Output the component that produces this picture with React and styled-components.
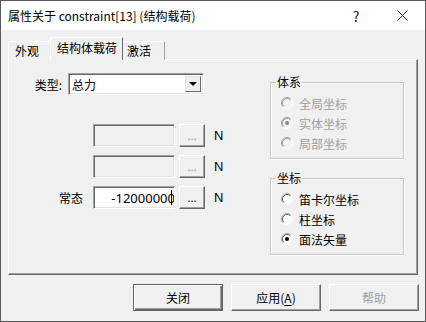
import styled, { createGlobalStyle } from "styled-components";

/////////////////////////////style/////////////////////////////
const GlobalStyle = createGlobalStyle`
  html, body {
    margin: 0;
    padding: 0;
    background: #f0f0f0;
  }
  body {
    font-family: "Noto Sans CJK SC", "Liberation Sans", sans-serif;
    font-size: 12px;
    color: #000;
  }
`;

const Window = styled.div`
  width: 426px;
  height: 322px;
  box-sizing: border-box;
  border: 1px solid #5a5a5a;
  background: #f0f0f0;
  display: flex;
  flex-direction: column;
  overflow: hidden;
`;

const TitleBar = styled.div`
  height: 29px;
  background: #fff;
  display: flex;
  align-items: center;
  padding-left: 7px;
  font-size: 12px;
`;

const TitleText = styled.div`
  flex: 1;
  white-space: nowrap;
`;

const TitleButton = styled.div`
  width: 46px;
  height: 29px;
  display: flex;
  align-items: center;
  justify-content: center;
  font-size: 14px;
  color: #222;
`;

const Body = styled.div`
  flex: 1;
  display: flex;
  flex-direction: column;
  padding: 8px 7px 0 7px;
`;

const TabStrip = styled.div`
  display: flex;
  height: 22px;
  align-items: flex-end;
  position: relative;
  z-index: 1;
  margin-bottom: -1px;
`;

const Tab = styled.div`
  box-sizing: border-box;
  width: ${(p) => p.w}px;
  height: ${(p) => (p.active ? 23 : 19)}px;
  padding-left: ${(p) => p.pl}px;
  margin: ${(p) => (p.active ? "0 -2px" : "0")};
  line-height: ${(p) => (p.active ? 19 : 17)}px;
  background: #f0f0f0;
  border-top: 1px solid #fff;
  border-left: 1px solid ${(p) => (p.first || p.active ? "#fff" : "transparent")};
  border-right: 1px solid ${(p) => (p.active ? "#696969" : "#a0a0a0")};
  white-space: nowrap;
  position: relative;
  z-index: ${(p) => (p.active ? 2 : 1)};
`;

const Panel = styled.div`
  width: 410px;
  height: 216px;
  box-sizing: border-box;
  border: 1px solid;
  border-color: #fff #696969 #696969 #fff;
  box-shadow: inset -1px -1px 0 #a0a0a0;
  display: flex;
`;

const LeftCol = styled.div`
  width: 261px;
  padding-top: 13px;
  display: flex;
  flex-direction: column;
`;

const TypeRow = styled.div`
  display: flex;
  align-items: center;
  height: 22px;
  margin-bottom: 29px;
`;

const TypeLabel = styled.div`
  width: 53px;
  text-align: right;
  margin-right: 6px;
`;

const Combo = styled.div`
  width: 136px;
  height: 22px;
  box-sizing: border-box;
  border: 1px solid;
  border-color: #a0a0a0 #fff #fff #a0a0a0;
  box-shadow: inset 1px 1px 0 #696969, inset -1px -1px 0 #e3e3e3;
  background: #fff;
  display: flex;
  align-items: center;
  padding: 2px 2px 2px 3px;
`;

const ComboText = styled.div`
  flex: 1;
`;

const ComboButton = styled.div`
  width: 16px;
  height: 16px;
  box-sizing: border-box;
  background: #f0f0f0;
  border: 1px solid;
  border-color: #e3e3e3 #696969 #696969 #e3e3e3;
  display: flex;
  align-items: center;
  justify-content: center;
`;

const Arrow = styled.div`
  width: 0;
  height: 0;
  border-left: 4px solid transparent;
  border-right: 4px solid transparent;
  border-top: 4px solid #000;
`;

const FieldRow = styled.div`
  display: flex;
  align-items: center;
  height: 23px;
  margin-bottom: 8px;
`;

const FieldLabel = styled.div`
  width: 74px;
  text-align: right;
  margin-right: 10px;
`;

const Field = styled.div`
  width: 82px;
  height: 23px;
  box-sizing: border-box;
  border: 1px solid;
  border-color: #a0a0a0 #fff #fff #a0a0a0;
  box-shadow: inset 1px 1px 0 #696969, inset -1px -1px 0 #e3e3e3;
  background: ${(p) => (p.disabled ? "#f0f0f0" : "#fff")};
  display: flex;
  align-items: center;
  justify-content: flex-end;
  overflow: hidden;
  padding-right: 2px;
  font-family: "Noto Sans", "Liberation Sans", sans-serif;
  font-size: 13px;
`;

const FieldValue = styled.span`
  margin-right: -4px;
  white-space: nowrap;
`;

const Caret = styled.span`
  display: inline-block;
  width: 1px;
  height: 15px;
  background: #000;
  position: relative;
  z-index: 1;
`;

const DotsButton = styled.div`
  width: 26px;
  height: 23px;
  margin-left: 4px;
  box-sizing: border-box;
  border: 1px solid;
  border-color: #fff #696969 #696969 #fff;
  box-shadow: inset -1px -1px 0 #a0a0a0;
  display: flex;
  align-items: center;
  justify-content: center;
  color: ${(p) => (p.disabled ? "#a0a0a0" : "#000")};
  font-size: 11px;
  padding-bottom: 2px;
`;

const Unit = styled.div`
  margin-left: 9px;
  font-family: "Liberation Sans", sans-serif;
  font-size: 13px;
`;

const RightCol = styled.div`
  width: 134px;
  padding-top: 15px;
  display: flex;
  flex-direction: column;
  gap: 12px;
`;

const Group = styled.fieldset`
  margin: 0;
  padding: 4px 10px 5px 10px;
  border: 1px solid #c8c8c8;
  box-shadow: 1px 1px 0 #fff, inset 1px 1px 0 #fff;
  min-width: 0;
`;

const Legend = styled.legend`
  padding: 0 1px;
  margin-left: -5px;
  line-height: 14px;
`;

const RadioRow = styled.div`
  display: flex;
  align-items: center;
  height: 20px;
  color: ${(p) => (p.disabled ? "#a0a0a0" : "#000")};
`;

const RadioLabel = styled.span`
  margin-left: 6px;
`;

const Footer = styled.div`
  display: flex;
  justify-content: flex-end;
  gap: 8px;
  padding: 9px 0 0 0;
  margin-right: -1px;
`;

const Button = styled.div`
  width: 90px;
  height: 27px;
  box-sizing: border-box;
  border: 1px solid;
  border-color: ${(p) =>
    p.primary ? "#646464" : "#fff #696969 #696969 #fff"};
  box-shadow: ${(p) =>
    p.primary
      ? "inset 1px 1px 0 #fff, inset -1px -1px 0 #696969, inset -2px -2px 0 #a0a0a0"
      : "inset -1px -1px 0 #a0a0a0"};
  display: flex;
  align-items: center;
  justify-content: center;
  color: ${(p) => (p.disabled ? "#a0a0a0" : "#000")};

  u {
    text-underline-offset: 2px;
  }
`;

function Radio({ checked, disabled }) {
  const dark = disabled ? "#a0a0a0" : "#696969";
  return (
    <svg width="12" height="12" viewBox="0 0 12 12">
      <circle cx="6" cy="6" r="4.5" fill={disabled ? "#f0f0f0" : "#fff"} />
      <path d="M2.11 9.89 A5.5 5.5 0 0 1 9.89 2.11" fill="none" stroke="#a0a0a0" />
      <path d="M2.82 9.18 A4.5 4.5 0 0 1 9.18 2.82" fill="none" stroke={dark} />
      <path d="M9.89 2.11 A5.5 5.5 0 0 1 2.11 9.89" fill="none" stroke="#fff" />
      {checked && <circle cx="6" cy="6" r="2" fill={disabled ? "#8a8a8a" : "#000"} />}
    </svg>
  );
}

function App() {
  return (
    <>
      <GlobalStyle />
      <Window>
        <TitleBar>
          <TitleText>属性关于 constraint[13] (结构载荷)</TitleText>
          <TitleButton>?</TitleButton>
          <TitleButton>
            <svg width="11" height="11" viewBox="0 0 11 11">
              <path d="M0.5 0.5 L10.5 10.5 M10.5 0.5 L0.5 10.5" stroke="#222" strokeWidth="1" />
            </svg>
          </TitleButton>
        </TitleBar>
        <Body>
          <TabStrip>
            <Tab w={44} pl={6} first>外观</Tab>
            <Tab w={73} pl={6} active>结构体载荷</Tab>
            <Tab w={44} pl={5}>激活</Tab>
          </TabStrip>
          <Panel>
            <LeftCol>
              <TypeRow>
                <TypeLabel>类型:</TypeLabel>
                <Combo>
                  <ComboText>总力</ComboText>
                  <ComboButton>
                    <Arrow />
                  </ComboButton>
                </Combo>
              </TypeRow>
              <FieldRow>
                <FieldLabel />
                <Field disabled />
                <DotsButton disabled>...</DotsButton>
                <Unit>N</Unit>
              </FieldRow>
              <FieldRow>
                <FieldLabel />
                <Field disabled />
                <DotsButton disabled>...</DotsButton>
                <Unit>N</Unit>
              </FieldRow>
              <FieldRow>
                <FieldLabel>常态</FieldLabel>
                <Field>
                  <FieldValue>-12000000</FieldValue>
                  <Caret />
                </Field>
                <DotsButton>...</DotsButton>
                <Unit>N</Unit>
              </FieldRow>
            </LeftCol>
            <RightCol>
              <Group>
                <Legend>体系</Legend>
                <RadioRow disabled>
                  <Radio disabled />
                  <RadioLabel>全局坐标</RadioLabel>
                </RadioRow>
                <RadioRow disabled>
                  <Radio disabled checked />
                  <RadioLabel>实体坐标</RadioLabel>
                </RadioRow>
                <RadioRow disabled>
                  <Radio disabled />
                  <RadioLabel>局部坐标</RadioLabel>
                </RadioRow>
              </Group>
              <Group>
                <Legend>坐标</Legend>
                <RadioRow>
                  <Radio />
                  <RadioLabel>笛卡尔坐标</RadioLabel>
                </RadioRow>
                <RadioRow>
                  <Radio />
                  <RadioLabel>柱坐标</RadioLabel>
                </RadioRow>
                <RadioRow>
                  <Radio checked />
                  <RadioLabel>面法矢量</RadioLabel>
                </RadioRow>
              </Group>
            </RightCol>
          </Panel>
          <Footer>
            <Button primary>关闭</Button>
            <Button>
              <span>
                应用(<u>A</u>)
              </span>
            </Button>
            <Button disabled>帮助</Button>
          </Footer>
        </Body>
      </Window>
    </>
  );
}

export default App;
